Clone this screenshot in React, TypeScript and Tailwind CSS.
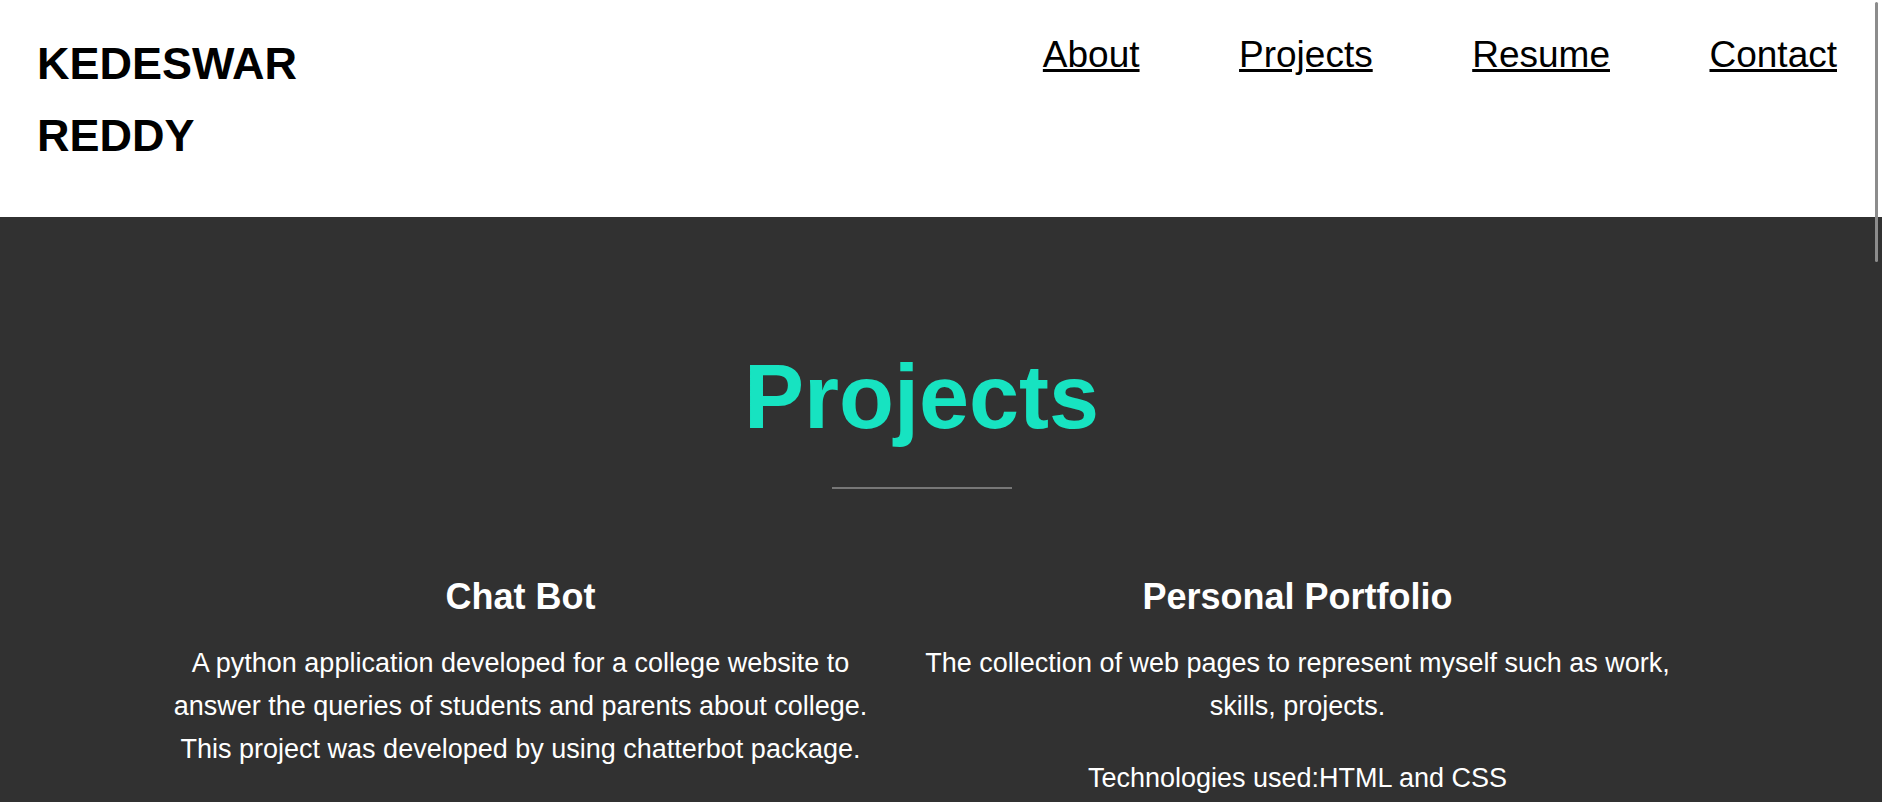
export default function App() {
  return (
    <div className="relative h-[802px] overflow-hidden bg-[#313131] font-['Liberation_Sans',Arial,sans-serif]">
      <header className="flex h-[217px] items-start justify-between bg-white pl-[37px] pr-[45px]">
        <h1 className="pt-[28px] text-[45px] font-bold leading-[72px] text-black">
          KEDESWAR
          <br />
          REDDY
        </h1>
        <nav className="flex gap-[99.5px] pt-[33px] text-[37px] leading-[44px] text-black">
          <a href="#about" className="underline">About</a>
          <a href="#projects" className="underline">Projects</a>
          <a href="#resume" className="underline">Resume</a>
          <a href="#contact" className="underline">Contact</a>
        </nav>
      </header>

      <section className="pt-[135px]">
        <div className="pr-[39px]">
          <h2 className="text-center text-[90px] font-bold leading-[90px] text-[#17e3c1]">Projects</h2>
          <div className="mx-auto mt-[45px] h-[2px] w-[180px] bg-[#777777]" />
        </div>

        <div className="mt-[86px] flex gap-[30px] pl-[147px] text-white">
          <div className="w-[747px] text-center">
            <h3 className="text-[36px] font-bold leading-[44px]">Chat Bot</h3>
            <p className="mt-[23px] text-[27px] leading-[43px]">
              A python application developed for a college website to answer the queries of students and parents about college. This project was developed by using chatterbot package.
            </p>
          </div>
          <div className="w-[747px] text-center">
            <h3 className="text-[36px] font-bold leading-[44px]">Personal Portfolio</h3>
            <p className="mt-[23px] text-[27px] leading-[43px]">
              The collection of web pages to represent myself such as work, skills, projects.
            </p>
            <p className="mt-[29px] text-[27px] leading-[43px]">Technologies used:HTML and CSS</p>
          </div>
        </div>
      </section>

      <div className="absolute right-[4px] top-[2px] h-[260px] w-[3px] rounded-full bg-[#8c8c8c]" />
    </div>
  );
}
